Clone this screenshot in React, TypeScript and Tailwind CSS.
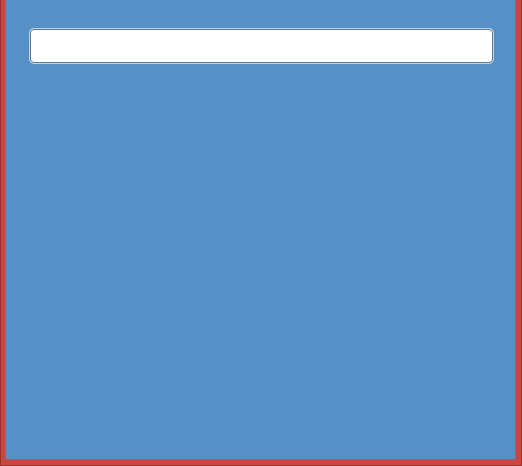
export default function App() {
  return (
    <div className="w-[522px] h-[466px] bg-[#9e302b] pl-px pr-px pb-px">
      <div className="h-full border-l-[4px] border-r-[5px] border-b-[5px] border-[#c9473f] bg-[#5590c6] shadow-[inset_1px_0_0_#a0607a,inset_-1px_0_0_#a0607a,inset_0_-1px_0_#a0607a] pt-[29px] pl-[25px] pr-[23px]">
        <input
          type="text"
          className="block w-full h-[34px] rounded-[4px] border border-[#677788] bg-white shadow-[0_0_0_1px_#b5d6f3] outline-none px-2 text-sm"
          style={{ fontFamily: '"Liberation Sans", sans-serif' }}
        />
      </div>
    </div>
  );
}
